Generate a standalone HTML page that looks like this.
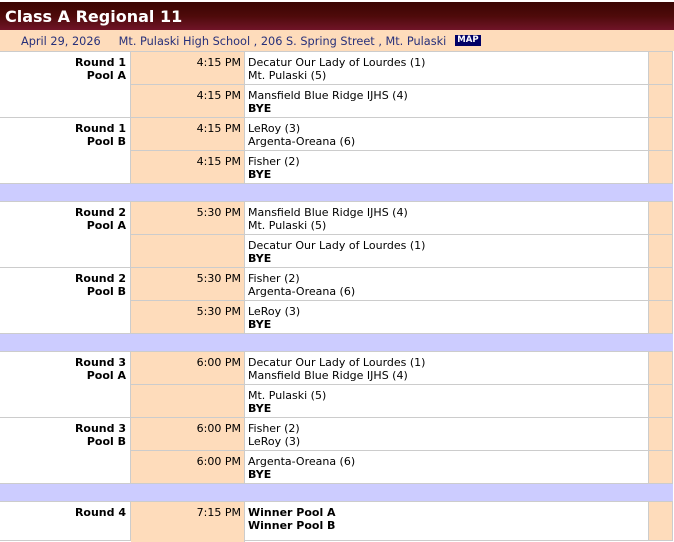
<!DOCTYPE html>
<html><head><meta charset="utf-8"><style>
*{margin:0;padding:0;box-sizing:border-box}
body{width:674px;height:534px;overflow:hidden;background:#fff;font-family:"DejaVu Sans",Verdana,sans-serif;font-size:11px;color:#000;position:relative}
.title{position:absolute;left:0;top:2px;width:674px;height:28px;background:linear-gradient(#3a0503,#4e0a0a 50%,#701428);color:#fff;font-weight:bold;font-size:16px;padding:5px 0 0 5px;font-family:"DejaVu Sans",Verdana,sans-serif}
.info{position:absolute;left:0;top:30px;width:674px;height:21px;background:#fedcbb;color:#27307a;font-size:11.3px;padding:5px 0 0 21px;white-space:pre}
.map{display:inline-block;background:#000066;color:#fff;font-size:8.5px;font-weight:bold;line-height:11px;padding:0 2px;vertical-align:3px;margin-left:9px}
.g{position:absolute;left:0;width:673px;background:#fff;border-top:1px solid #ccc;border-bottom:1px solid #ccc;border-right:1px solid #ccc}
.lab{position:absolute;left:0;top:0;width:131px;height:100%;border-right:1px solid #ccc;text-align:right;padding:4px 4px 0 0;font-weight:bold;line-height:13px}
.tm{position:absolute;left:131px;width:114px;background:#fedcbb;border-right:1px solid #ccc;text-align:right;padding:4px 3px 0 0;line-height:13px;height:33px}
.tr{position:absolute;left:245px;width:404px;padding:4px 0 0 3px;line-height:13px;height:33px}
.rp{position:absolute;left:648px;top:0;width:24px;height:100%;background:#fedcbb;border-left:1px solid #ccc}
.hl{position:absolute;left:131px;width:541px;height:1px;background:#ccc;top:32px}
.sep{position:absolute;left:0;width:673px;height:19px;background:#ccccff;border-top:1px solid #ccc;border-bottom:1px solid #ccc}
b{font-weight:bold}
</style></head><body>
<div class="title">Class A Regional 11</div>
<div class="info">April 29, 2026     Mt. Pulaski High School , 206 S. Spring Street , Mt. Pulaski<span class="map">MAP</span></div>

<div class="g" style="top:51px;height:67px">
<div class="lab">Round 1<br>Pool A</div>
<div class="tm" style="top:0">4:15 PM</div><div class="tr" style="top:0">Decatur Our Lady of Lourdes (1)<br>Mt. Pulaski (5)</div>
<div class="tm" style="top:33px">4:15 PM</div><div class="tr" style="top:33px">Mansfield Blue Ridge IJHS (4)<br><b>BYE</b></div>
<div class="rp"></div><div class="hl"></div></div>

<div class="g" style="top:117px;height:67px">
<div class="lab">Round 1<br>Pool B</div>
<div class="tm" style="top:0">4:15 PM</div><div class="tr" style="top:0">LeRoy (3)<br>Argenta-Oreana (6)</div>
<div class="tm" style="top:33px">4:15 PM</div><div class="tr" style="top:33px">Fisher (2)<br><b>BYE</b></div>
<div class="rp"></div><div class="hl"></div></div>

<div class="sep" style="top:183px"></div>

<div class="g" style="top:201px;height:67px">
<div class="lab">Round 2<br>Pool A</div>
<div class="tm" style="top:0">5:30 PM</div><div class="tr" style="top:0">Mansfield Blue Ridge IJHS (4)<br>Mt. Pulaski (5)</div>
<div class="tm" style="top:33px"></div><div class="tr" style="top:33px">Decatur Our Lady of Lourdes (1)<br><b>BYE</b></div>
<div class="rp"></div><div class="hl"></div></div>

<div class="g" style="top:267px;height:67px">
<div class="lab">Round 2<br>Pool B</div>
<div class="tm" style="top:0">5:30 PM</div><div class="tr" style="top:0">Fisher (2)<br>Argenta-Oreana (6)</div>
<div class="tm" style="top:33px">5:30 PM</div><div class="tr" style="top:33px">LeRoy (3)<br><b>BYE</b></div>
<div class="rp"></div><div class="hl"></div></div>

<div class="sep" style="top:333px"></div>

<div class="g" style="top:351px;height:67px">
<div class="lab">Round 3<br>Pool A</div>
<div class="tm" style="top:0">6:00 PM</div><div class="tr" style="top:0">Decatur Our Lady of Lourdes (1)<br>Mansfield Blue Ridge IJHS (4)</div>
<div class="tm" style="top:33px"></div><div class="tr" style="top:33px">Mt. Pulaski (5)<br><b>BYE</b></div>
<div class="rp"></div><div class="hl"></div></div>

<div class="g" style="top:417px;height:67px">
<div class="lab">Round 3<br>Pool B</div>
<div class="tm" style="top:0">6:00 PM</div><div class="tr" style="top:0">Fisher (2)<br>LeRoy (3)</div>
<div class="tm" style="top:33px">6:00 PM</div><div class="tr" style="top:33px">Argenta-Oreana (6)<br><b>BYE</b></div>
<div class="rp"></div><div class="hl"></div></div>

<div class="sep" style="top:483px"></div>

<div class="g" style="top:501px;height:40px">
<div class="lab">Round 4</div>
<div class="tm" style="top:0;height:40px">7:15 PM</div><div class="tr" style="top:0"><b>Winner Pool A<br>Winner Pool B</b></div>
<div class="rp"></div></div>
</body></html>
